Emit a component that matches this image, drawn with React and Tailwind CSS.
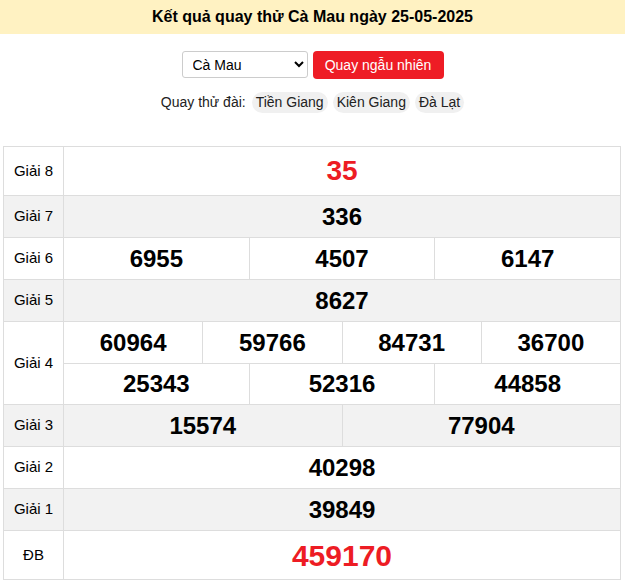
import { useState } from 'react'

const rows = [
  { label: 'Giải 8', nums: ['35'], big: true },
  { label: 'Giải 7', nums: ['336'], alt: true },
  { label: 'Giải 6', nums: ['6955', '4507', '6147'] },
  { label: 'Giải 5', nums: ['8627'], alt: true },
  { label: 'Giải 4', nums: ['60964', '59766', '84731', '36700'], second: ['25343', '52316', '44858'] },
  { label: 'Giải 3', nums: ['15574', '77904'], alt: true },
  { label: 'Giải 2', nums: ['40298'] },
  { label: 'Giải 1', nums: ['39849'], alt: true },
  { label: 'ĐB', nums: ['459170'], special: true },
]

function NumRow({ nums, className }) {
  return (
    <div className={`flex h-[41px] ${className || ''}`}>
      {nums.map((n, i) => (
        <div
          key={n}
          className={`flex flex-1 items-center justify-center text-[24px] font-bold text-black ${
            i > 0 ? 'border-l border-[#ddd]' : ''
          }`}
        >
          {n}
        </div>
      ))}
    </div>
  )
}

export default function App() {
  const [province, setProvince] = useState('Cà Mau')

  return (
    <div className="min-h-[581px] bg-white font-['Liberation_Sans',Arial,sans-serif] text-[#222]">
      <div className="flex h-[34px] items-center justify-center bg-[#fff2c2] text-[16px] font-bold text-black">
        Kết quả quay thử Cà Mau ngày 25-05-2025
      </div>

      <div className="mt-[17px] flex justify-center gap-[5px]">
        <select
          value={province}
          onChange={(e) => setProvince(e.target.value)}
          className="h-[27px] w-[126px] rounded-[3px] border border-[#ccc] bg-white px-[6px] text-[14px] text-black"
        >
          <option>Cà Mau</option>
          <option>Tiền Giang</option>
          <option>Kiên Giang</option>
          <option>Đà Lạt</option>
        </select>
        <button className="h-[28px] w-[131px] rounded-[4px] bg-[#ee1c25] text-[14px] text-white">
          Quay ngẫu nhiên
        </button>
      </div>

      <div className="mt-[13px] flex items-center justify-center gap-[5px] text-[14px] text-[#222]">
        <span className="mr-[1px]">Quay thử đài:</span>
        {['Tiền Giang', 'Kiên Giang', 'Đà Lạt'].map((p) => (
          <span key={p} className="rounded-full bg-[#f0f0f0] px-[4px] py-[2px] leading-[17px]">
            {p}
          </span>
        ))}
      </div>

      <div className="ml-[3px] mt-[33px] w-[618px] border border-[#ddd]">
        {rows.map((r, idx) => (
          <div
            key={r.label}
            className={`flex ${idx > 0 ? 'border-t border-[#ddd]' : ''} ${r.alt ? 'bg-[#f2f2f2]' : 'bg-white'}`}
          >
            <div className="flex w-[60px] shrink-0 items-center justify-center border-r border-[#ddd] text-[15px] text-black">
              {r.label}
            </div>
            <div className="flex-1">
              {r.big ? (
                <div className="flex h-[48px] items-center justify-center text-[28px] font-bold text-[#ed1c24]">
                  {r.nums[0]}
                </div>
              ) : r.special ? (
                <div className="flex h-[48px] items-center justify-center text-[30px] font-bold text-[#ed1c24]">
                  {r.nums[0]}
                </div>
              ) : (
                <>
                  <NumRow nums={r.nums} />
                  {r.second && <NumRow nums={r.second} className="border-t border-[#ddd]" />}
                </>
              )}
            </div>
          </div>
        ))}
      </div>
    </div>
  )
}
